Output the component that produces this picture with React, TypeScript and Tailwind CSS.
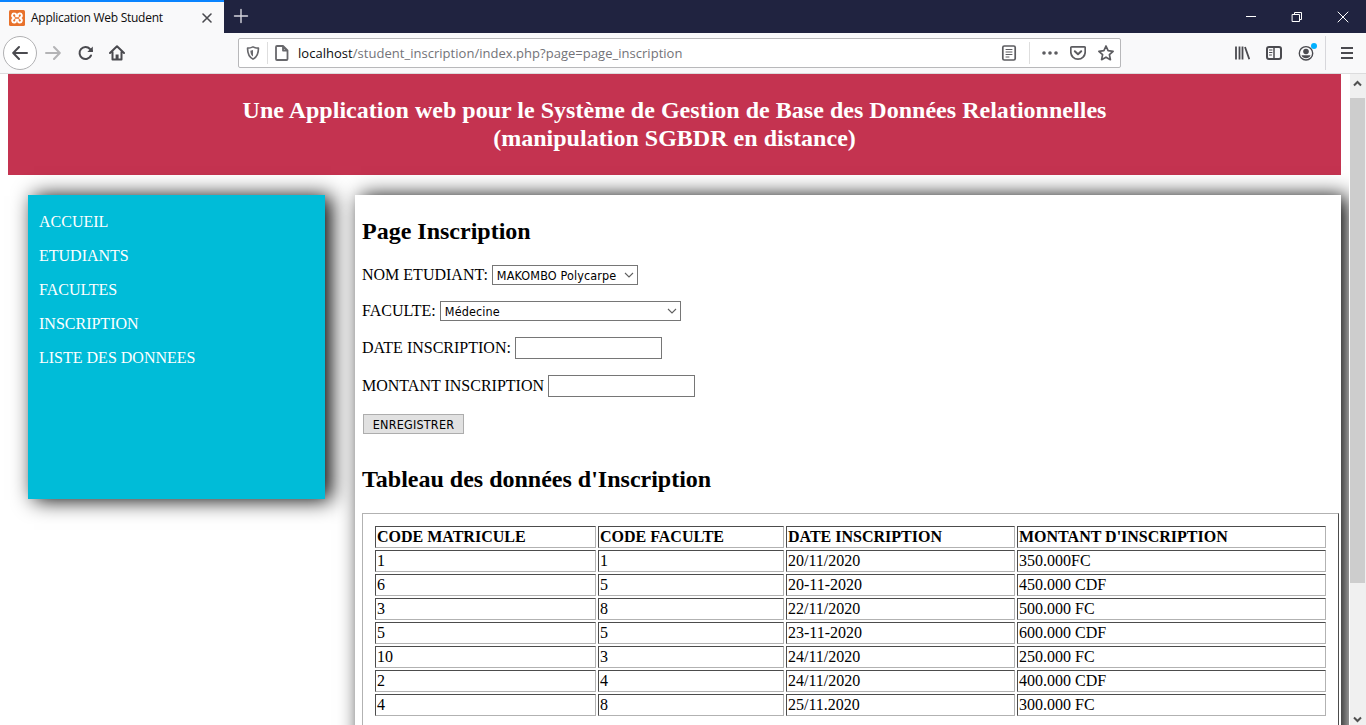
import type { ReactNode } from "react";

const menu = ["ACCUEIL", "ETUDIANTS", "FACULTES", "INSCRIPTION", "LISTE DES DONNEES"];

const rows = [
  ["1", "1", "20/11/2020", "350.000FC"],
  ["6", "5", "20-11-2020", "450.000 CDF"],
  ["3", "8", "22/11/2020", "500.000 FC"],
  ["5", "5", "23-11-2020", "600.000 CDF"],
  ["10", "3", "24/11/2020", "250.000 FC"],
  ["2", "4", "24/11/2020", "400.000 CDF"],
  ["4", "8", "25/11.2020", "300.000 FC"],
];

function Icon({ children, className = "" }: { children: ReactNode; className?: string }) {
  return (
    <svg viewBox="0 0 16 16" className={`block h-4 w-4 shrink-0 ${className}`} fill="none" stroke="#4a4a4f" strokeWidth="2" strokeLinecap="round" strokeLinejoin="round">
      {children}
    </svg>
  );
}

function TabStrip() {
  return (
    <div className="flex h-[33px] bg-[#202340]">
      <div className="flex w-[224px] items-center border-t-2 border-[#0a84ff] bg-[#f9f9fa] pl-[9px]">
        <svg viewBox="0 0 16 16" className="block h-4 w-4">
          <rect width="16" height="16" rx="1.5" fill="#e8712b" />
          <path d="M5.2 3.4a2 2 0 0 1 2 2v.8h1.6v-.8a2 2 0 1 1 2.7 1.9L11 8l.5.7a2 2 0 1 1-2.7 1.9v-.8H7.200v.8a2 2 0 1 1-2.700-1.900L5 8l-.5-.7a2 2 0 0 1 .7-3.900z" fill="none" stroke="#fff" strokeWidth="1.9" />
        </svg>
        <span className="ml-[6px] w-[166px] whitespace-nowrap text-[12px] leading-4 tracking-[-0.27px] text-[#0c0c0d]">Application Web Student</span>
        <Icon className="ml-[2px]"><path d="M4 4l8 8M12 4l-8 8" strokeWidth="1.600" /></Icon>
      </div>
      <Icon className="ml-[9px] mt-2"><path d="M8 1.500v13M1.500 8h13" stroke="#d6d6de" strokeWidth="1.400" /></Icon>
      <div className="ml-auto flex items-center gap-[30px] pr-[15px]">
        <Icon><path d="M3 7.500h10" stroke="#fff" strokeWidth="1" strokeLinecap="butt" /></Icon>
        <Icon><path d="M3.500 5.500h7v7h-7zM5.500 5.500v-2h7v7h-2" stroke="#fff" strokeWidth="1" strokeLinejoin="miter" /></Icon>
        <Icon><path d="M3 3l10 10M13 3L3 13" stroke="#fff" strokeWidth="1" /></Icon>
      </div>
    </div>
  );
}

function Toolbar() {
  return (
    <div className="flex h-[41px] items-center border-b border-[#dcdcdd] bg-[#f9f9fa]">
      <div className="ml-[3px] flex h-[34px] w-[34px] items-center justify-center rounded-full border border-[#b1b1b3] bg-white">
        <Icon><path d="M15 8H1.500M7 2L1.200 8 7 14" /></Icon>
      </div>
      <Icon className="ml-2"><path d="M1 8h13.500M9 2l5.800 6L9 14" stroke="#b4b4b6" /></Icon>
      <Icon className="ml-[17px]">
        <path d="M13 10.500A6 6 0 1 1 12 4l2 2" />
        <path d="M14.800 1.500v5.500H9.300z" fill="#4a4a4f" stroke="none" />
      </Icon>
      <Icon className="ml-[15px]">
        <path d="M1 8l7-6.800L15 8M3.500 7v7.500h9V7" />
        <path d="M6.600 14V9.500h3V14z" fill="#4a4a4f" stroke="none" />
      </Icon>
      <div className="ml-[113px] flex h-[30px] w-[883px] items-center rounded-[2px] border border-[#b8b8ba] bg-white">
        <Icon className="ml-[7px] h-[14px] w-[14px]">
          <path d="M8 1C5.500 2.200 3.500 2.500 1.800 2.500 1.700 9 3 12.500 8 15c5-2.500 6.300-6 6.200-12.500C12.500 2.500 10.500 2.200 8 1z" stroke="#68686c" strokeWidth="1.900" />
          <path d="M8 4.500v7.500C5.800 10.500 5.100 8.500 5 5.300z" fill="#68686c" stroke="none" />
        </Icon>
        <div className="ml-[7px] h-[22px] w-px bg-[#dedede]" />
        <Icon className="ml-[6px]"><path d="M3 1h6l4.500 4.500V14a1 1 0 0 1-1 1H3a1 1 0 0 1-1-1V2a1 1 0 0 1 1-1zM9 1v4.500h4.500" stroke="#68686c" strokeWidth="1.800" /></Icon>
        <span className="ml-[8px] whitespace-nowrap text-[13px] leading-5 tracking-[0.03px] text-[#737378]"><span className="text-[#0c0c0d]">localhost</span>/student_inscription/index.php?page=page_inscription</span>
        <div className="ml-auto flex items-center pr-[6px]">
          <Icon><rect x="1.800" y="1" width="12.400" height="14" rx="1.500" stroke="#5c5c60" strokeWidth="1.700" /><path d="M5 4.500h6M5 7h6M5 9.500h6M5 12h3" stroke="#5c5c60" strokeWidth="1" /></Icon>
          <div className="ml-[12px] h-[22px] w-px bg-[#dedede]" />
          <Icon className="ml-[12px]"><path d="M2 8h.01M8 8h.01M14 8h.01" stroke="#5c5c60" strokeWidth="3.600" /></Icon>
          <Icon className="ml-[12px]"><path d="M1.800 1.800h12.400a1 1 0 0 1 1 1V7a7.200 7.200 0 0 1-14.400 0V2.800a1 1 0 0 1 1-1z" stroke="#5c5c60" strokeWidth="1.700" /><path d="M4.800 6.200L8 9.200l3.200-3" stroke="#5c5c60" strokeWidth="2" /></Icon>
          <Icon className="ml-[12px]"><path d="M8 1l2.100 4.700 5 .6-3.700 3.400 1 5L8 12.200l-4.400 2.500 1-5L.9 6.300l5-.6z" stroke="#5c5c60" strokeWidth="1.700" /></Icon>
        </div>
      </div>
      <div className="ml-auto flex h-full items-center">
        <Icon><path d="M2 1.500v13M5.500 1.500v13M8.500 1.500v13M11 2l4.300 12.300" strokeWidth="1.800" strokeLinecap="butt" /></Icon>
        <Icon className="ml-4"><rect x="1" y="2" width="14" height="12" rx="2" /><path d="M8 2v12" strokeWidth="1.500" /><path d="M3.500 5h2.500M3.500 7.500h2.500M3.500 10h2" strokeWidth="1" /></Icon>
        <div className="relative ml-4">
          <Icon><circle cx="8" cy="8.300" r="6.700" strokeWidth="1.400" /><circle cx="8" cy="6.500" r="2.800" fill="#4a4a4f" stroke="none" /><path d="M3.500 10.300h9c-.8 2.200-2.500 3-4.500 3s-3.700-.8-4.500-3z" fill="#4a4a4f" stroke="none" /></Icon>
          <span className="absolute -top-[2px] left-[13px] h-[6px] w-[6px] rounded-full bg-[#00b0ff]" />
        </div>
        <div className="ml-[11px] h-[34px] w-px bg-[#d7d7db]" />
        <Icon className="ml-[13px] mr-[11px]"><path d="M2 3h12M2 8h12M2 13h12" strokeLinecap="butt" /></Icon>
      </div>
    </div>
  );
}

function Select({ value, className }: { value: string; className: string }) {
  return (
    <span className={`flex h-5 items-center justify-between border border-[#767676] bg-white pl-1 pr-[3px] font-['DejaVu_Sans_Condensed','DejaVu_Sans',sans-serif] text-[12.5px] tracking-[0.13px] [font-stretch:condensed] ${className}`}>
      <span className="whitespace-nowrap pt-px">{value}</span>
      <svg viewBox="0 0 10 10" className="h-[10px] w-[10px]"><path d="M1 3l4 4 4-4" fill="none" stroke="#606060" strokeWidth="1.100" /></svg>
    </span>
  );
}

function Sidebar() {
  return (
    <nav className="ml-5 mt-5 h-[304px] w-[297px] bg-[#00bcd8] pl-[11px] pt-[10px] text-[16px] leading-[34px] text-white shadow-[6px_1px_20px_#000]">
      {menu.map((m) => <div key={m}>{m}</div>)}
    </nav>
  );
}

const cell = "h-[22px] border border-t-[#4c4c4c] border-l-[#4c4c4c] border-r-[#b2b2b2] border-b-[#b2b2b2] pl-px text-left leading-5 whitespace-nowrap";

function Content() {
  return (
    <main className="ml-[30px] mt-5 h-[560px] w-[986px] bg-white pl-[7px] shadow-[6px_1px_20px_#000]">
      <h2 className="pt-[22px] text-[24px] font-bold leading-[28px]">Page Inscription</h2>
      <div className="mt-5 flex h-5 items-center gap-[4px]"><span>NOM ETUDIANT:</span><Select value="MAKOMBO Polycarpe" className="w-[146px]" /></div>
      <div className="mt-4 flex h-5 items-center gap-[4px]"><span>FACULTE:</span><Select value="Médecine" className="w-[241px]" /></div>
      <div className="mt-4 flex h-[22px] items-center gap-[4px]"><span>DATE INSCRIPTION:</span><input className="h-[22px] w-[147px] border border-[#767676] bg-white" /></div>
      <div className="mt-4 flex h-[22px] items-center gap-[4px]"><span>MONTANT INSCRIPTION</span><input className="h-[22px] w-[147px] border border-[#767676] bg-white" /></div>
      <button className="ml-px mt-[17px] block h-5 w-[101px] border border-[#adadad] bg-[#e1e1e1] pt-px font-['DejaVu_Sans_Condensed','DejaVu_Sans',sans-serif] text-[12.5px] leading-[17px] tracking-[0.2px] [font-stretch:condensed]">ENREGISTRER</button>
      <h2 className="mt-[31px] text-[24px] font-bold leading-[28px]">Tableau des données d'Inscription</h2>
      <div className="mt-5 h-[240px] w-[977px] border border-b-0 border-l-[#b2b2b2] border-r-[#4c4c4c] border-t-[#b2b2b2] pl-[10px] pt-[10px]">
        <table className="w-[955px] table-fixed border-separate border-spacing-[2px]">
          <colgroup><col className="w-[221px]" /><col className="w-[186px]" /><col className="w-[229px]" /><col className="w-[309px]" /></colgroup>
          <thead>
            <tr>{["CODE MATRICULE", "CODE FACULTE", "DATE INSCRIPTION", "MONTANT D'INSCRIPTION"].map((h) => <th key={h} className={cell}>{h}</th>)}</tr>
          </thead>
          <tbody>
            {rows.map((r) => <tr key={r[0]}>{r.map((v, i) => <td key={i} className={cell}>{v}</td>)}</tr>)}
          </tbody>
        </table>
      </div>
    </main>
  );
}

function Scrollbar() {
  return (
    <div className="flex w-[17px] flex-col items-center border-l border-white bg-[#f0f0f0]">
      <svg viewBox="0 0 16 24" className="h-6 w-4"><path d="M4 11.500L7.500 8l3.500 3.500" fill="none" stroke="#505050" strokeWidth="2" /></svg>
      <div className="mr-px h-[485px] w-[15px] bg-[#cdcdcd]" />
      <svg viewBox="0 0 16 17" className="mt-auto h-[17px] w-4"><path d="M4 9.500L7.500 13 11 9.500" fill="none" stroke="#505050" strokeWidth="2" /></svg>
    </div>
  );
}

export default function App() {
  return (
    <div className="flex h-[725px] w-[1366px] flex-col overflow-hidden bg-white font-['Open_Sans','Noto_Sans',sans-serif]">
      <TabStrip />
      <Toolbar />
      <div className="flex min-h-0 flex-1">
        <div className="w-[1349px] overflow-hidden pl-2 font-['Liberation_Serif',serif] text-[16px] leading-[18px] text-black">
          <header className="h-[101px] w-[1333px] bg-[#c43350] pt-[22px] text-center text-[24px] font-bold leading-[28px] tracking-[0.02px] text-white">
            Une Application web pour le Système de Gestion de Base des Données Relationnelles<br />(manipulation SGBDR en distance)
          </header>
          <div className="flex items-start"><Sidebar /><Content /></div>
        </div>
        <Scrollbar />
      </div>
    </div>
  );
}
